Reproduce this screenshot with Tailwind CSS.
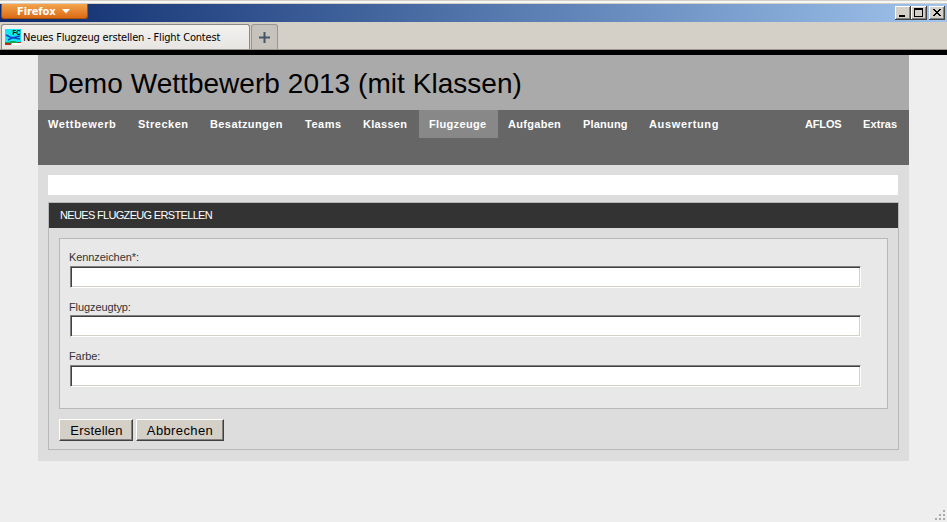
<!DOCTYPE html>
<html lang="de">
<head>
<meta charset="utf-8">
<title>Neues Flugzeug erstellen - Flight Contest</title>
<script src="https://cdn.jsdelivr.net/npm/@tailwindcss/browser@4"></script>
</head>
<body class="w-[947px] h-[522px] overflow-hidden bg-[#eeeeee] font-['Liberation_Sans',Arial,sans-serif] relative">
<header class="h-[55px] bg-[#d4d0c8] flex flex-col border-b-[5px] border-black">
  <div class="h-1 shrink-0 border-t border-[#d4d0c8] bg-[#d4d0c8]"><div class="h-[2px] bg-white/80"></div></div>
  <div class="h-[18px] shrink-0 flex items-start justify-between bg-linear-to-r from-[#0e2a6c] to-[#a0c4ec] pl-px pr-[2px]">
    <button class="h-[15px] w-[87px] flex items-center pl-[15px] gap-[6px] bg-linear-to-b from-[#f2a44c] to-[#dc6a10] border border-t-0 border-[#a9540c] rounded-b-[3px] text-white font-['DejaVu_Sans_Condensed','DejaVu_Sans',sans-serif]">
      <span class="pt-[2px] text-[11px] leading-[14px] font-bold tracking-[-0.1px] whitespace-nowrap">Firefox</span>
      <svg width="8" height="5" viewBox="0 0 8 5"><path d="M0 0h8L4 4.500z" fill="#fff"/></svg>
    </button>
    <div class="flex pt-[2px]">
      <svg width="16" height="14" viewBox="0 0 16 14" shape-rendering="crispEdges"><path fill="#404040" d="M0 0h16v14H0z"/><path fill="#fff" d="M0 0h15v13H0z"/><path fill="#808080" d="M1 1h14v12H1z"/><path fill="#d4d0c8" d="M1 1h13v11H1z"/><path d="M4 9h6v2H4z"/></svg>
      <svg width="16" height="14" viewBox="0 0 16 14" shape-rendering="crispEdges"><path fill="#404040" d="M0 0h16v14H0z"/><path fill="#fff" d="M0 0h15v13H0z"/><path fill="#808080" d="M1 1h14v12H1z"/><path fill="#d4d0c8" d="M1 1h13v11H1z"/><path fill-rule="evenodd" d="M3 2h9v9H3zM4 4v6h7V4z"/></svg>
      <svg class="ml-[2px]" width="16" height="14" viewBox="0 0 16 14" shape-rendering="crispEdges"><path fill="#404040" d="M0 0h16v14H0z"/><path fill="#fff" d="M0 0h15v13H0z"/><path fill="#808080" d="M1 1h14v12H1z"/><path fill="#d4d0c8" d="M1 1h13v11H1z"/><path d="M4 3h2v1H4zM10 3h2v1h-2zM5 4h2v1H5zM9 4h2v1H9zM6 5h4v1H6zM7 6h2v1H7zM6 7h4v1H6zM5 8h2v1H5zM9 8h2v1H9zM4 9h2v1H4zM10 9h2v1h-2z"/></svg>
    </div>
  </div>
  <div class="h-7 shrink-0 flex items-start pt-[2px] pl-px gap-px border-b border-[#99968f]">
    <div class="w-[249px] h-[25px] flex items-center pl-[3px] gap-[2px] border border-b-0 border-[#8d8a85] rounded-t-[3px] bg-linear-to-b from-[#f3f2f0] to-[#e6e5e2]">
      <svg class="shrink-0" width="16" height="16" viewBox="0 0 16 16"><path fill="#12e8f4" d="M0 0h16v16H0z"/><path fill="#16a64c" d="M0 13h4l2-1h4l2 1h4v1H9l-2 2H0z"/><path fill="#fff" d="M7 14h9v2H6z"/><path fill="#b32d21" d="M0 14h4l2 1v1H0zM12 13h4v1h-4z"/><path d="M1 6l4 2 4 1 6 1M3 11l4-2 8-2" fill="none" stroke="#1645c8" stroke-width="1.4"/><text x="7.500" y="6" font-size="7.500" font-weight="bold" textLength="8" lengthAdjust="spacingAndGlyphs" font-family="Liberation Sans">FC</text></svg>
      <span class="pt-px text-[11px] leading-4 tracking-[-0.17px] whitespace-nowrap font-['DejaVu_Sans_Condensed','DejaVu_Sans',sans-serif]">Neues Flugzeug erstellen - Flight Contest</span>
    </div>
    <div class="w-[27px] h-[25px] flex items-center justify-center border border-b-0 border-[#999691] rounded-t-[3px] bg-[#c6c3bd]">
      <svg width="11" height="11" viewBox="0 0 11 11"><path d="M4.500 0h2v4.500H11v2H6.500V11h-2V6.500H0v-2h4.500z" fill="#45566b"/></svg>
    </div>
  </div>
</header>
<main class="ml-[38px] w-[871px] h-[406px] bg-[#dddddd]">
  <h1 class="h-[55px] pl-[10px] bg-[#aaaaaa] text-[28px] leading-[57px] text-black whitespace-nowrap"><span class="tracking-[0.04px]">Demo Wettbewerb 2013 (mit Klassen)</span></h1>
  <nav class="h-[55px] bg-[#666666] flex text-white text-[11px] leading-[28px] font-bold tracking-[0.3px] whitespace-nowrap *:h-7 *:pl-[10px]">
    <a class="w-[90px] tracking-[0.63px]">Wettbewerb</a><a class="w-[72px] tracking-[0.5px]">Strecken</a><a class="w-[95px] tracking-[0.4px]">Besatzungen</a><a class="w-[58px] tracking-[0.5px]">Teams</a><a class="w-[66px]">Klassen</a><a class="w-[79px] tracking-[0.35px] bg-[#888888]">Flugzeuge</a><a class="w-[75px]">Aufgaben</a><a class="w-[66px] tracking-[0.2px]">Planung</a><a class="w-[156px] tracking-[0.65px]">Auswertung</a><a class="w-[58px] tracking-[-0.15px]">AFLOS</a><a class="w-[55px] tracking-[0.1px]">Extras</a>
  </nav>
  <div class="px-[10px] pt-[10px]">
    <div class="h-5 w-[850px] bg-white"></div>
    <section class="mt-[7px] w-[851px] h-[248px] border border-[#b8b8b8]">
      <h2 class="h-[25px] bg-[#333333] text-white pl-[11px] text-[11px] leading-[24px] whitespace-nowrap"><span class="tracking-[-0.67px]">NEUES FLUGZEUG ERSTELLEN</span></h2>
      <form class="pl-[10px] pt-[10px]">
        <div class="w-[829px] h-[171px] border border-[#b8b8b8] bg-[#e8e8e8] pl-[9px] pt-[11px] text-[11px] leading-[14px] text-[#333333]">
          <label class="block h-[50px]"><span class="block tracking-[-0.08px]">Kennzeichen*:</span><input class="block ml-px mt-[2px] w-[791px] h-[22px] bg-white border border-t-[#808080] border-l-[#808080] border-r-white border-b-white shadow-[inset_1px_1px_0_#404040,inset_-1px_-1px_0_#d4d0c8]"></label>
          <label class="block h-[49px]"><span class="block tracking-[-0.1px]">Flugzeugtyp:</span><input class="block ml-px mt-px w-[791px] h-[22px] bg-white border border-t-[#808080] border-l-[#808080] border-r-white border-b-white shadow-[inset_1px_1px_0_#404040,inset_-1px_-1px_0_#d4d0c8]"></label>
          <label class="block"><span class="block tracking-[-0.1px]">Farbe:</span><input class="block ml-px mt-[2px] w-[791px] h-[22px] bg-white border border-t-[#808080] border-l-[#808080] border-r-white border-b-white shadow-[inset_1px_1px_0_#404040,inset_-1px_-1px_0_#d4d0c8]"></label>
        </div>
        <div class="mt-[10px] flex gap-[3px] text-[13px] leading-[19px] text-black">
          <button type="button" class="w-[74px] h-[22px] bg-[#d4d0c8] border border-t-white border-l-white border-r-[#404040] border-b-[#404040] shadow-[inset_-1px_-1px_0_#808080] pl-px pt-px tracking-[0.2px]">Erstellen</button>
          <button type="button" class="w-[88px] h-[22px] bg-[#d4d0c8] border border-t-white border-l-white border-r-[#404040] border-b-[#404040] shadow-[inset_-1px_-1px_0_#808080] pt-px tracking-[0.38px]">Abbrechen</button>
        </div>
      </form>
    </section>
  </div>
</main>
<svg class="absolute right-[2px] bottom-[2px]" width="10" height="10" viewBox="0 0 10 10" shape-rendering="crispEdges"><path fill="#aaa" d="M8 0h2v2H8zM4 4h2v2H4zM8 4h2v2H8zM0 8h2v2H0zM4 8h2v2H4zM8 8h2v2H8z"/></svg>
</body>
</html>
